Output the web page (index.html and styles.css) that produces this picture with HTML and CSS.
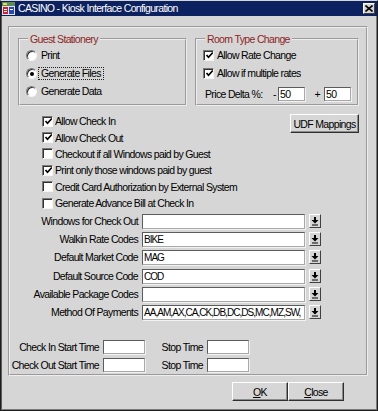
FILE: index.html
```html
<!DOCTYPE html>
<html lang="en">
<head>
<meta charset="utf-8">
<title>CASINO - Kiosk Interface Configuration</title>
<link rel="stylesheet" href="styles.css">
</head>
<body>
<div class="window">
  <div class="titlebar">
    <svg class="app-icon" width="13" height="13" viewBox="0 0 13 13">
      <rect x="0" y="0" width="13" height="13" fill="#dfe3ea"/>
      <rect x="0" y="0" width="13" height="4" fill="#5c8c5a"/>
      <rect x="1" y="1" width="4" height="2" fill="#e8d850"/>
      <rect x="1" y="5" width="5" height="7" fill="#c8242a"/>
      <rect x="7" y="5" width="5" height="7" fill="#2a48b0"/>
      <rect x="2" y="7" width="3" height="1" fill="#fff"/>
      <rect x="8" y="7" width="3" height="1" fill="#fff"/>
      <rect x="2" y="9" width="3" height="1" fill="#fff"/>
    </svg>
    <span class="title">CASINO - Kiosk Interface Configuration</span>
    <span class="close-btn">
      <svg width="8" height="7" viewBox="0 0 8 7"><path d="M0.5 0.5 L7.5 6.5 M7.5 0.5 L0.5 6.5" stroke="#000" stroke-width="1.6"/></svg>
    </span>
  </div>
  <div class="body">
    <div class="panel">
      <div class="groups">
        <fieldset class="group guest">
          <legend>Guest Stationery</legend>
          <div class="opt"><span class="radio"></span><span>Print</span></div>
          <div class="opt"><span class="radio on"></span><span class="focus">Generate Files</span></div>
          <div class="opt"><span class="radio"></span><span>Generate Data</span></div>
        </fieldset>
        <fieldset class="group room">
          <legend>Room Type Change</legend>
          <div class="opt chk-opt"><span class="check on"></span><span>Allow Rate Change</span></div>
          <div class="opt chk-opt"><span class="check on"></span><span>Allow if multiple rates</span></div>
          <div class="delta">
            <span class="delta-label">Price Delta %:</span>
            <span class="sign minus">-</span>
            <span class="field small">50</span>
            <span class="sign plus">+</span>
            <span class="field small">50</span>
          </div>
        </fieldset>
      </div>

      <div class="mid">
        <div class="checks">
          <div class="crow"><span class="check on"></span><span>Allow Check In</span></div>
          <div class="crow"><span class="check on"></span><span>Allow Check Out</span></div>
          <div class="crow"><span class="check"></span><span>Checkout if all Windows paid by Guest</span></div>
          <div class="crow"><span class="check on"></span><span>Print only those windows paid by guest</span></div>
          <div class="crow"><span class="check"></span><span>Credit Card Authorization by External System</span></div>
          <div class="crow"><span class="check"></span><span>Generate Advance Bill at Check In</span></div>
        </div>
        <button class="btn udf" type="button">UDF Mappings</button>
      </div>

      <div class="form">
        <label class="flabel">Windows for Check Out</label>
        <span class="field"></span>
        <span class="drop"></span>

        <label class="flabel">Walkin Rate Codes</label>
        <span class="field">BIKE</span>
        <span class="drop"></span>

        <label class="flabel">Default Market Code</label>
        <span class="field">MAG</span>
        <span class="drop"></span>

        <label class="flabel">Default Source Code</label>
        <span class="field">COD</span>
        <span class="drop"></span>

        <label class="flabel">Available Package Codes</label>
        <span class="field"></span>
        <span class="drop"></span>

        <label class="flabel">Method Of Payments</label>
        <span class="field">AA,AM,AX,CA,CK,DB,DC,DS,MC,MZ,SW,</span>
        <span class="drop"></span>
      </div>

      <div class="times">
        <label class="flabel">Check In Start Time</label>
        <span class="field time"></span>
        <label class="flabel">Stop Time</label>
        <span class="field time"></span>

        <label class="flabel">Check Out Start Time</label>
        <span class="field time"></span>
        <label class="flabel">Stop Time</label>
        <span class="field time"></span>
      </div>
    </div>

    <div class="footer">
      <button class="btn action" type="button"><u>O</u>K</button>
      <button class="btn action" type="button"><u>C</u>lose</button>
    </div>
  </div>
</div>
</body>
</html>
```

FILE: styles.css
```css
* {
  box-sizing: border-box;
}

html,
body {
  margin: 0;
  padding: 0;
}

body {
  width: 378px;
  height: 411px;
  overflow: hidden;
  background: #d6d6d6;
  font-family: "Liberation Sans", Arial, sans-serif;
  font-size: 10.5px;
  letter-spacing: -0.65px;
  color: #000;
}

.window {
  width: 378px;
  height: 411px;
  display: flex;
  flex-direction: column;
  background: #d6d6d6;
  border: 1px solid #1e1e1e;
  border-top-color: #d6d6d6;
  box-shadow: inset -1px -1px 0 #7a7a7a, inset 1px 0 0 #5a5a5a;
}

/* ---------- title bar ---------- */
.titlebar {
  flex: none;
  height: 15px;
  display: flex;
  align-items: center;
  padding: 0 2px 0 1px;
  background: #0c215f;
  color: #fff;
}

.app-icon {
  flex: none;
  margin-right: 3px;
}

.title {
  flex: 1;
  line-height: 15px;
  white-space: nowrap;
}

.close-btn {
  flex: none;
  width: 12px;
  height: 11px;
  display: flex;
  align-items: center;
  justify-content: center;
  background: #d6d6d6;
  border: 1px solid;
  border-color: #ffffff #404040 #404040 #ffffff;
}

/* ---------- body ---------- */
.body {
  flex: 1;
  padding: 10px 9px 0 7px;
}

.panel {
  height: 350px;
  display: flex;
  flex-direction: column;
  border: 2px groove #eeeeee;
  padding: 5px 7px 0 8px;
}

/* ---------- group boxes ---------- */
.groups {
  display: flex;
  gap: 8px;
}

.group {
  margin: 0;
  height: 73px;
  min-width: 0;
  border: 2px groove #eeeeee;
  padding: 1px 0 0 6px;
}

.group.guest {
  width: 169px;
}

.group.room {
  width: 164px;
}

.group legend {
  color: #8e2424;
  line-height: 12px;
  padding: 0 2px;
  margin-left: 2px;
}

.opt {
  height: 18px;
  display: flex;
  align-items: center;
  gap: 4px;
  white-space: nowrap;
}

.chk-opt {
  gap: 3px;
}

.focus {
  outline: 1px dotted #222;
  padding: 0 2px;
  margin-left: -2px;
  line-height: 11px;
}

.radio {
  flex: none;
  width: 11px;
  height: 11px;
  border-radius: 50%;
  background: #fff;
  border: 1px solid;
  border-color: #7a7a7a #f4f4f4 #f4f4f4 #7a7a7a;
  box-shadow: inset 1px 1px 0 #303030;
  display: flex;
  align-items: center;
  justify-content: center;
}

.radio.on::after {
  content: "";
  width: 4px;
  height: 4px;
  border-radius: 50%;
  background: #000;
  margin: 1px 0 0 1px;
}

.check {
  flex: none;
  width: 11px;
  height: 11px;
  background: #fff;
  border: 1px solid;
  border-color: #7a7a7a #f4f4f4 #f4f4f4 #7a7a7a;
  box-shadow: inset 1px 1px 0 #303030;
}

.check.on {
  background: #fff url("data:image/svg+xml;utf8,<svg xmlns='http://www.w3.org/2000/svg' width='9' height='9' viewBox='0 0 9 9'><path d='M1.5 4 L3.5 6.3 L7.8 1.5' fill='none' stroke='black' stroke-width='1.7'/></svg>") 1px 0 / 9px 9px no-repeat;
}

.delta {
  margin-top: 3px;
  height: 18px;
  display: flex;
  align-items: center;
  padding-left: 2px;
  white-space: nowrap;
}

.delta-label {
  width: 68px;
}

.sign {
  display: inline-block;
}

.sign.minus {
  width: 5px;
}

.sign.plus {
  width: 19px;
  text-align: right;
  padding-right: 4px;
}

/* ---------- fields ---------- */
.field {
  display: block;
  height: 15px;
  background: #fff;
  border: 1px solid;
  border-color: #5c5c5c #a8a8a8 #a8a8a8 #5c5c5c;
  box-shadow: 1px 1px 0 #f2f2f2;
  padding-left: 1px;
  font-size: 10px;
  line-height: 13px;
  white-space: nowrap;
  overflow: hidden;
  letter-spacing: -0.95px;
}

.field.small {
  width: 27px;
  height: 14px;
  line-height: 12px;
  font-size: 10.5px;
  letter-spacing: -0.5px;
}

.field.time {
  height: 14px;
}

.drop {
  width: 12px;
  height: 14px;
  background: #d6d6d6 url("data:image/svg+xml;utf8,<svg xmlns='http://www.w3.org/2000/svg' width='10' height='12' viewBox='0 0 10 12'><rect x='4' y='2' width='2' height='3' fill='black'/><polygon points='1.5,5 8.5,5 5,8.5' fill='black'/><rect x='2' y='9.5' width='6' height='1' fill='black'/></svg>") center / 10px 12px no-repeat;
  border: 1px solid;
  border-color: #ffffff #404040 #404040 #ffffff;
}

/* ---------- middle ---------- */
.mid {
  display: flex;
  justify-content: space-between;
  align-items: flex-start;
  margin-top: 7px;
  padding-left: 24px;
}

.crow {
  height: 16.4px;
  display: flex;
  align-items: center;
  gap: 2px;
  white-space: nowrap;
}

.btn {
  font: inherit;
  letter-spacing: inherit;
  color: #000;
  background: #d6d6d6;
  border: 1px solid;
  border-color: #ffffff #303030 #303030 #ffffff;
  box-shadow: inset -1px -1px 0 #8a8a8a;
  padding: 0;
  margin: 0;
  white-space: nowrap;
}

.btn.udf {
  width: 69px;
  height: 19px;
  margin-top: 1px;
}

/* ---------- form ---------- */
.form {
  margin-top: 2.6px;
  display: grid;
  grid-template-columns: 120px 163px 12px;
  grid-auto-rows: 15px;
  column-gap: 4px;
  row-gap: 3.2px;
  align-items: start;
}

.flabel {
  text-align: right;
  white-space: nowrap;
  line-height: 15px;
}

.times {
  margin-top: 20px;
  margin-left: -8px;
  display: grid;
  grid-template-columns: 89px 42px 54px 42px;
  grid-auto-rows: 14px;
  column-gap: 4px;
  row-gap: 4px;
}

.times .flabel {
  line-height: 14px;
}

/* ---------- footer ---------- */
.footer {
  display: flex;
  justify-content: flex-end;
  padding: 6px 24px 0 0;
}

.btn.action {
  width: 56px;
  height: 19px;
}
```
